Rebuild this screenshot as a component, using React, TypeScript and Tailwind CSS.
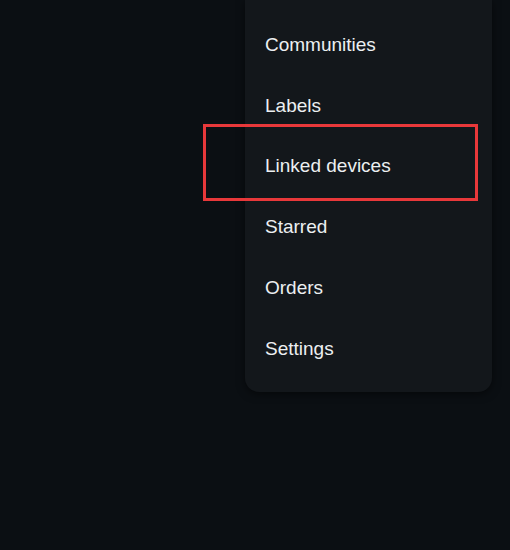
import React from "react";

const items = ["Communities", "Labels", "Linked devices", "Starred", "Orders", "Settings"];

export default function App() {
  return (
    <div className="w-[510px] h-[550px] bg-[#0b0f13] overflow-hidden relative" style={{ fontFamily: '"Liberation Sans", Arial, sans-serif' }}>
      <div className="ml-[245px] w-[247px] h-[392px] bg-[#13171b] rounded-b-[14px] shadow-[0_2px_8px_rgba(0,0,0,0.5)] flex flex-col pt-[15px]">
        {items.map((t) => (
          <div key={t} className="h-[60.7px] flex items-center pl-[20px] text-[19px] text-[#eceff1]">
            {t}
          </div>
        ))}
      </div>
      <div className="absolute left-[203px] top-[124px] w-[275px] h-[77px] border-[3px] border-[#e8383a]" />
    </div>
  );
}
